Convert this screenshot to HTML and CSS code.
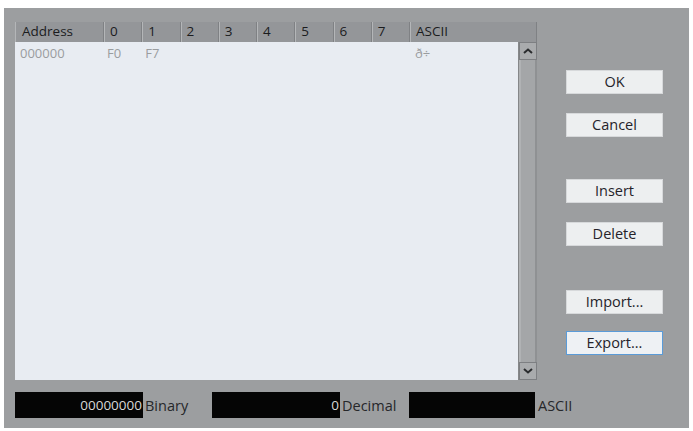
FILE: index.html
```html
<!DOCTYPE html>
<html>
<head>
<meta charset="utf-8">
<link rel="stylesheet" href="styles.css">
</head>
<body>
<div class="dialog">
  <div class="top">
    <div class="table">
      <div class="head">
        <div class="hc c-addr">Address</div>
        <div class="hc c-b">0</div>
        <div class="hc c-b">1</div>
        <div class="hc c-b">2</div>
        <div class="hc c-b">3</div>
        <div class="hc c-b">4</div>
        <div class="hc c-b">5</div>
        <div class="hc c-b">6</div>
        <div class="hc c-b">7</div>
        <div class="hc c-ascii">ASCII</div>
      </div>
      <div class="bodywrap">
        <div class="rows">
          <div class="row">
            <div class="c-addr cell">000000</div>
            <div class="c-b cell">F0</div>
            <div class="c-b cell">F7</div>
            <div class="c-b cell"></div>
            <div class="c-b cell"></div>
            <div class="c-b cell"></div>
            <div class="c-b cell"></div>
            <div class="c-b cell"></div>
            <div class="c-b cell"></div>
            <div class="c-ascii cell">ð÷</div>
          </div>
        </div>
        <div class="scroll">
          <div class="sbtn"><svg width="10" height="6" viewBox="0 0 10 6"><path d="M1 5 L5 1.5 L9 5" fill="none" stroke="#2a2c2e" stroke-width="2"/></svg></div>
          <div class="track"></div>
          <div class="sbtn"><svg width="10" height="6" viewBox="0 0 10 6"><path d="M1 1 L5 4.5 L9 1" fill="none" stroke="#2a2c2e" stroke-width="2"/></svg></div>
        </div>
      </div>
    </div>
    <div class="buttons">
      <div class="btn b-ok">OK</div>
      <div class="btn b-cancel">Cancel</div>
      <div class="btn b-insert">Insert</div>
      <div class="btn b-delete">Delete</div>
      <div class="btn b-import">Import...</div>
      <div class="btn b-export focus">Export...</div>
    </div>
  </div>
  <div class="bottom">
    <div class="field"><div class="box">00000000</div><span class="lbl">Binary</span></div>
    <div class="field"><div class="box">0</div><span class="lbl">Decimal</span></div>
    <div class="field"><div class="box b3"></div><span class="lbl l3">ASCII</span></div>
  </div>
</div>
</body>
</html>
```

FILE: styles.css
```css
html, body { margin: 0; padding: 0; background: #ffffff; }
body { font-family: "Open Sans", "Noto Sans", sans-serif; font-size: 12px; color: #1f2022; }

.dialog {
  margin: 8px 0 0 4px;
  width: 685px;
  height: 420px;
  box-sizing: border-box;
  background: #9c9ea0;
  padding: 14px 0 0 11px;
  display: flex;
  flex-direction: column;
}
.top { display: flex; height: 358px; }
.table { width: 522px; display: flex; flex-direction: column; }
.head { display: flex; height: 20px; background: #8f9194; }
.hc {
  box-sizing: border-box;
  height: 20px;
  line-height: 19px;
  padding-left: 5px;
  background: #949699;
  border-left: 1px solid #b4b6b8;
  border-right: 1px solid #7f8184;
  color: #1b1c1e;
  font-size: 13.5px;
}
.c-addr { width: 89px; }
.c-b { width: 38.25px; }
.c-ascii { width: 127px; }
.head .c-addr { padding-left: 6px; }

.bodywrap { flex: 1; display: flex; }
.rows { width: 503px; background: #e8ecf2; }
.row { display: flex; height: 22px; }
.cell { box-sizing: border-box; padding-left: 5px; line-height: 23px; color: #9a9c9f; font-size: 13px; }
.row .c-addr { padding-left: 5px; }
.row .c-b { padding-left: 3px; }
.row .c-ascii { width: 108px; padding-left: 5px; }

.scroll {
  width: 19px;
  display: flex;
  flex-direction: column;
  background: #a4a6a8;
  border-left: 1px solid #858789;
  box-sizing: border-box;
}
.sbtn {
  height: 18px;
  box-sizing: border-box;
  border: 1px solid #7d7f82;
  background: #a9abad;
  display: flex;
  align-items: center;
  justify-content: center;
}
.track { flex: 1; border-left: 2px solid #b0b2b4; border-right: 2px solid #8f9193; }

.buttons { margin-left: 29px; width: 97px; display: flex; flex-direction: column; }
.btn {
  height: 24px;
  box-sizing: border-box;
  background: #edeff0;
  border: 1px solid #d7d9db;
  text-align: center;
  line-height: 22px;
  font-size: 14.5px;
  color: #25232a;
}
.b-ok { margin-top: 48px; }
.b-cancel { margin-top: 19px; }
.b-insert { margin-top: 42px; }
.b-delete { margin-top: 19px; }
.b-import { margin-top: 44px; }
.b-export { margin-top: 17px; }
.focus { border: 1px solid #5a9bd8; background: #eef1f4; }

.bottom { display: flex; margin-top: 12px; height: 26px; }
.field { display: flex; align-items: center; width: 197px; }
.box {
  height: 26px;
  width: 128px;
  flex: none;
  background: #050505;
  color: #d8d8d8;
  text-align: right;
  line-height: 26px;
  font-size: 13.5px;
  box-sizing: border-box;
  padding-right: 1px;
}
.lbl { margin-left: 2px; font-size: 14.5px; color: #26272a; }
.b3 { width: 126px; }
.l3 { margin-left: 3px; }
```
